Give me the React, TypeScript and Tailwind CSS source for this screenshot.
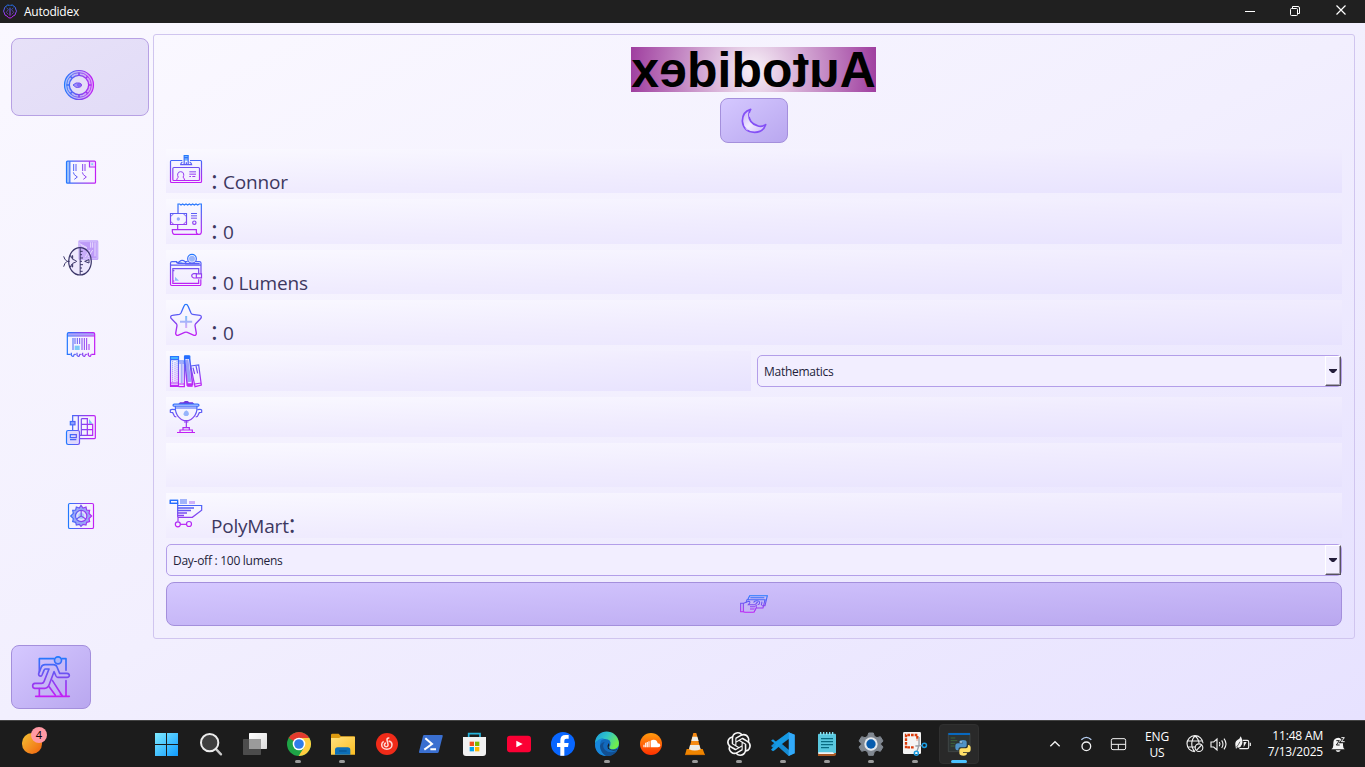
import type { ReactNode } from "react";

type ArtProps = {
  box: string;
  w: number;
  h: number;
  children: ReactNode;
  className?: string;
};

function Art({ box, w, h, children, className = "[&>g]:[stroke-width:3.6]" }: ArtProps) {
  return (
    <svg viewBox={box} width={w} height={h} className={`block shrink-0 ${className}`} fill="none">
      {children}
    </svg>
  );
}

function Grad({ id, x1, y1, x2, y2 }: { id: string; x1: number; y1: number; x2: number; y2: number }) {
  return (
    <linearGradient id={id} gradientUnits="userSpaceOnUse" x1={x1} y1={y1} x2={x2} y2={y2}>
      <stop offset="0" stopColor="#1f7bff" />
      <stop offset="0.5" stopColor="#7a4cf0" />
      <stop offset="1" stopColor="#c51df5" />
    </linearGradient>
  );
}

/* ---------- sidebar icons ---------- */

function ClockIcon() {
  return (
    <Art box="186 204 102 102" w={34} h={34}>
      <Grad id="clock" x1={192} y1={0} x2={282} y2={0} />
      <circle cx="237" cy="255" r="36" stroke="url(#clock)" strokeOpacity="0.3" strokeWidth="14" />
      <g stroke="url(#clock)">
        <circle cx="237" cy="255" r="43.500" strokeWidth="3.500" />
        <circle cx="237" cy="255" r="37" strokeWidth="2.500" />
        <circle cx="237" cy="255" r="29" strokeWidth="4" />
        <path strokeWidth="5" d="M237 218v9M237 283v9M200 255h9M265 255h9M211 229l5 5M258 276l5 5M211 281l5-5M258 234l5-5" />
        <path strokeWidth="3" fill="#8b6cf5" fillOpacity="0.7" d="M219 255l9-6h10q6 1 7 6q-1 6-7 7h-10z" />
        <circle cx="237" cy="255" r="4" strokeWidth="2.500" fill="#7f93fb" />
      </g>
    </Art>
  );
}

function NotebookIcon() {
  return (
    <Art box="72 54 102 84" w={34} h={28}>
      <Grad id="nb" x1={78} y1={0} x2={168} y2={0} />
      <rect x="80" y="64" width="9" height="65" fill="#9cc0fb" />
      <rect x="151" y="66" width="12" height="12" fill="#e6d9ff" />
      <rect x="154" y="70" width="5" height="5" fill="#7fd0f8" />
      <g stroke="url(#nb)">
        <rect x="79.500" y="63.500" width="87" height="66" rx="3" />
        <path d="M89.500 64v65M148.500 64v17h18" />
        <path strokeWidth="3" d="M101 72v21M108 72v21M128 72v21M135 72v21M100 97l3 7 9 7-9 7M127 97l3 7 9 7-9 7" />
      </g>
    </Art>
  );
}

function FishIcon() {
  return (
    <Art box="66 294 114 120" w={38} h={40}>
      <rect x="115" y="301" width="60" height="59" rx="4" fill="#c3a6fa" />
      <rect x="119" y="305" width="52" height="51" rx="2" fill="#bd9af8" stroke="#d8c5ff" strokeWidth="2" />
      <path d="M119 311l22 12M122 316l18 9M152 307v16M158 307v16M165 307v42M149 330l-14 22M158 330l-14 22" stroke="#e8dcff" strokeWidth="3" />
      <g stroke="#3a3568">
        <ellipse cx="120" cy="364" rx="34" ry="41" fill="#dcd0fb" fillOpacity="0.35" />
        <path
          strokeWidth="3"
          d="M120.500 323v82M120 334h8M120 344h6M120 354h9M120 364h6M120 374h9M120 384h6M120 394h8M71 349q2 9 10 15-8 6-10 16M81 364h8M91 346q2 7 5 9v-8h2v11q9 3 12 6-3 3-12 6v11h-2v-8q-4 2-5 9M134 364l13-5v10z"
        />
      </g>
    </Art>
  );
}

function ReportIcon() {
  return (
    <Art box="72 567 102 90" w={34} h={30}>
      <Grad id="rep" x1={80} y1={0} x2={165} y2={0} />
      <rect x="83" y="579" width="80" height="8" fill="#a9a2fb" />
      <rect x="104" y="617" width="15" height="13" fill="#7fcaf7" />
      <g stroke="url(#rep)">
        <path d="M92 643H82V582q0-4 4-4h74q4 0 4 4v61h-10M82 588h82" />
        <path strokeWidth="3" d="M99 594v36M105 594v18M112 594v18M119 594v18M126 594v36M133 594v36M140 594v36M147 612v18M108 643h-6M125 643h-7M142 643h-6" />
        <path d="M94 638v8q2 4 6 3 2-1 2-6M111 638v8q2 4 6 3 2-1 2-6M128 638v8q2 4 6 3 2-1 2-6M145 638v8q2 4 6 3 2-1 2-6" />
      </g>
    </Art>
  );
}

function PlannerIcon() {
  return (
    <Art box="72 69 102 102" w={34} h={34}>
      <Grad id="plan" x1={78} y1={0} x2={168} y2={0} />
      <path d="M147 87v14h11z" fill="#77caf4" />
      <g stroke="url(#plan)">
        <path d="M98 94V77h64q4 0 4 4v62q0 3-4 3h-42M98 105v16M115 78v43M124 86v50M124 86h20M142 86v50M124 103h34v33h-38M124 119h34" />
        <rect x="91" y="94.500" width="14" height="10" fill="#8aa1ff" />
        <rect x="79.500" y="121.500" width="39" height="42" rx="5" fill="#ded8fd" />
        <path d="M91 134h18v9H91zM90 149h19" />
      </g>
    </Art>
  );
}

function GearFrameIcon() {
  return (
    <Art box="78 333 90 90" w={30} h={30}>
      <Grad id="gear" x1={84} y1={0} x2={162} y2={0} />
      <rect x="85.500" y="340.500" width="75" height="75" rx="4" stroke="url(#gear)" strokeWidth="3.500" />
      <path
        d="M118 354l5-8 6 8 9-3 2 9 9 1-2 9 8 8-8 8 2 9-9 2-2 8-9-2-6 6-5-6-9 2-2-8-9-2 2-9-8-8 8-8-2-9 9-1 2-9z"
        fill="#99a5f8"
        stroke="url(#gear)"
        strokeWidth="3.500"
      />
      <circle cx="123.500" cy="378" r="17" fill="#e2ddfd" stroke="url(#gear)" strokeWidth="3.500" />
      <circle cx="123.500" cy="378" r="9" fill="#a5cdf6" />
      <path d="M123.500 362v16l-14 9M123.500 378l14 9" stroke="url(#gear)" strokeWidth="3.500" />
    </Art>
  );
}

function ExitIcon() {
  return (
    <Art box="90 75 126 132" w={42} h={44} className="[&>g]:[stroke-width:5]">
      <Grad id="exit" x1={0} y1={80} x2={0} y2={200} />
      <g stroke="url(#exit)" strokeLinejoin="round" strokeLinecap="round">
        <path d="M118 126V86h44M186 86h12v35M198 152v47M118 176v22M107 199h101" />
        <circle cx="174" cy="91" r="10.500" fill="#a9b3fa" />
        <path d="M122 138q-7 0-6-7l8-20q3-7 11-7h25q8 0 11 7l8 19h22q7 1 7 6 0 6-7 6h-28q-3 0-5-4l-6-13-14 38q-4 12-14 12h-30q-6-1-6-8 0-6 7-7h20q5 0 7-5l15-38h-11q-3 0-4 4l-6 14q-2 4-4 3z" />
        <path d="M148 171l18 25M157 151l30 47M181 192q8 4 4 6" />
      </g>
    </Art>
  );
}

function AppLogo() {
  return (
    <svg viewBox="6 9 48 48" width="16" height="16" className="block" fill="none">
      <Grad id="logo" x1={0} y1={12} x2={0} y2={52} />
      <g stroke="url(#logo)" strokeWidth="3">
        <path d="M29 13q-7-3-11 3-6 3-5 8-5 7 0 12 0 8 8 9 4 7 9 6M31 13q7-3 11 3 6 3 5 8 5 7 0 12 0 8-8 9-4 7-9 6M30 20v24" />
        <path d="M20 20l5 6-6 8 6 6M40 20l-5 6 6 8-6 6" opacity="0.6" />
      </g>
    </svg>
  );
}

function MoonIcon() {
  return (
    <Art box="420 231 84 84" w={28} h={28}>
      <defs>
        <linearGradient id="moon" x1="0" y1="0" x2="1" y2="1">
          <stop offset="0" stopColor="#c3aaf8" />
          <stop offset="0.5" stopColor="#f1ebff" />
          <stop offset="1" stopColor="#c9b2fb" />
        </linearGradient>
      </defs>
      <path
        d="M452 238Q427 245 427 273Q430 306 464 307Q490 306 497 284Q485 292 472 287Q444 278 447 251Q448 244 452 238Z"
        fill="url(#moon)"
        stroke="#8450f5"
        strokeWidth="5"
        strokeLinejoin="round"
      />
      <path d="M449 250v10M437 295l6 5" stroke="#cdbaf9" strokeWidth="4" />
    </Art>
  );
}

/* ---------- row icons ---------- */

function BadgeIcon() {
  return (
    <Art box="33 12 126 132" w={42} h={44}>
      <Grad id="badge" x1={0} y1={30} x2={0} y2={114} />
      <path d="M88 33h11v14H88z" fill="#75b7fb" />
      <g stroke="url(#badge)">
        <path d="M82 46.500H49q-2.500 0-2.500 3v60q0 3 3 3h87q3 0 3-3v-60q0-3-3-3H105" />
        <path d="M87.500 60V31.500h12V60M88 38h11M82 51q-5 3-5 8h33q0-5-6-8M94 52v8" />
        <rect x="53.500" y="67.500" width="80" height="39" rx="3" />
        <path strokeWidth="3" d="M65 106q1-8 5-9-3-5-2-10 1-7 9-7t9 7q1 5-2 10 4 1 5 9M103 80.500h20M103 87.500h20M103 94.500h5M112 94.500h9" />
      </g>
    </Art>
  );
}

function ReceiptIcon() {
  return (
    <Art box="33 162 126 135" w={42} h={45}>
      <Grad id="rcpt" x1={0} y1={174} x2={0} y2={270} />
      <g stroke="url(#rcpt)">
        <path d="M69 205v-28h5l4 3 5-3 5 3 5-3 5 3 5-3 5 3 5-3 5 3 5-3 5 3 5-3h6v85q-1 6-6 6H57q-4-1-5-8v-6h72v8q1 5 6 6M68 239v13" />
        <path d="M46.500 205.500h48v33h-48z" />
        <path strokeWidth="3" d="M47 215l9-9M85 206l9 9M47 229l9 9M85 238l9-9M108 205.500h18M108 212.500h18M108 219.500h18" />
        <circle cx="118" cy="233" r="5" />
      </g>
      <circle cx="70" cy="222" r="5" fill="#91a9fb" />
    </Art>
  );
}

function WalletIcon() {
  return (
    <Art box="33 315 126 132" w={42} h={44}>
      <Grad id="wal" x1={0} y1={327} x2={0} y2={422} />
      <circle cx="111" cy="341" r="9" fill="#9bb5fa" />
      <path d="M70 354q6-7 14 0z" fill="#8ac5fa" />
      <path d="M60 395l12 12H60z" fill="#8ebcf6" />
      <g stroke="url(#wal)">
        <circle cx="111" cy="341" r="13" />
        <path d="M138 387v-33q0-4-5-4h-11M98 350h-8q-5-5-13-3-5 3-7 6h-5v-3H51q-4 0-4.500 4v64q0 3.500 4 3.500h84q3 0 3-4v-15M47 360.500h91M67 355h25M92 350v6h42" />
        <path d="M131 386v-15H53.500v44H131v-12M54 377h4M54 408h4" />
        <path d="M124 386.500h15.500v12H124M124 386h-8q-6 2-6 6t6 7h8z" />
      </g>
    </Art>
  );
}

function StarIcon() {
  return (
    <Art box="33 15 126 135" w={42} h={45}>
      <Grad id="star" x1={0} y1={27} x2={0} y2={123} />
      <defs>
        <linearGradient id="plus" gradientUnits="userSpaceOnUse" x1="0" y1="62" x2="0" y2="98">
          <stop offset="0" stopColor="#73bef9" />
          <stop offset="1" stopColor="#d7a9fa" />
        </linearGradient>
      </defs>
      <path
        d="M93 28q4 0 6 5l9 21q2 4 5 4l22 3q5 1 4 6-1 3-4 6l-13 13q-2 3-2 6l4 23q0 7-7 6l-20-9q-4-1-8 0l-20 9q-6 1-7-6l4-23q0-3-2-6L51 73q-5-4-4-8 1-4 5-4l21-3q3-1 5-4l9-21q2-5 6-5z"
        stroke="url(#star)"
        strokeWidth="4"
      />
      <path d="M93.500 63v36M75 80.500h36.500" stroke="url(#plus)" strokeWidth="6" />
    </Art>
  );
}

function BooksIcon() {
  return (
    <Art box="33 168 126 120" w={42} h={40}>
      <Grad id="books" x1={0} y1={180} x2={0} y2={276} />
      <path d="M48 185h22v8H48z" fill="#45b4ff" />
      <path d="M77 207h6v57h-6z" fill="#a7adf9" />
      <path d="M91 195l9-2 9 67-11 2z" fill="#9b9ffa" />
      <g stroke="url(#books)">
        <path d="M46.500 184.500h24v90h-24zM47 194h23M47 264h23M71 198h17v77H71M73 204h13M73 267h14" />
        <path strokeDasharray="3 3" strokeWidth="2.500" d="M53 199v62M60 202v59M66 199v62" />
        <path d="M89 184v9l8 80M104 182v9l9 80M88 183h16M89 190h16M97 273h16" strokeWidth="4.500" />
        <path d="M107 213l24-3 8 60-19 5zM114 218l5 19M123 213l5 22M119 267l19-3" />
      </g>
      <path d="M88 182h16v10H88z" fill="#256cff" />
      <path d="M97 265h14v9H97zM47 269h24v6H47z" fill="#bd2af6" />
    </Art>
  );
}

function TrophyIcon() {
  return (
    <Art box="33 306 126 120" w={42} h={40}>
      <Grad id="tro" x1={0} y1={318} x2={0} y2={414} />
      <path d="M70 327l5-5h10l5-4h8l5 4h10l5 5z" fill="#7038dd" />
      <path d="M88 350l6-4 6 4 2 8-4 5h-9l-4-5z" fill="#96b4fb" />
      <g stroke="url(#tro)">
        <path d="M58 327.500h70q4 0 4 3t-4 3H58q-4 0-4-3t4-3zM61 334q-1 22 11 33 7 8 15 10h13q8-2 15-10 12-11 11-33M60 339h66" />
        <path d="M60 344q-11-2-14 1v7l7 1 4 8q1 4 7 5M127 344q11-2 13 1v7l-7 1-4 8q-1 4-7 5" />
        <path d="M94 378v20M87 381h13M84 404v-6h19v6M75 411v-6h37v6M66 412.500h54" />
      </g>
    </Art>
  );
}

function CartIcon() {
  return (
    <Art box="33 39 126 135" w={42} h={45}>
      <Grad id="cart" x1={0} y1={58} x2={0} y2={141} />
      <path d="M75 57h21v15H75z" fill="#a2b4fa" />
      <path d="M102 63h18v9h-18z" fill="#cfb1fa" />
      <g stroke="url(#cart)">
        <path d="M69 76.500h71v14l-28 21.500H69v12M69 61H46v9h22v42" />
        <path d="M67 84h50M67 91.500h41M67 99h29M67 106.500h20" strokeWidth="4" />
        <circle cx="68.500" cy="133" r="7.500" />
        <circle cx="102" cy="132" r="7.500" />
        <path d="M76 133h19" />
      </g>
      <path d="M46 61h22v9H46z" stroke="#256dff" strokeWidth="4" />
    </Art>
  );
}

function CashIcon() {
  return (
    <Art box="0 0 90 60" w={30} h={20} className="[&>g]:[stroke-width:3.2]">
      <Grad id="cash" x1={0} y1={4} x2={0} y2={58} />
      <g stroke="url(#cash)">
        <path d="M26 17l6-12h53l-7 30h-9M21 26l3-9h54l-6 25H52M34 11h42" />
        <path d="M44 26q1-6 9-6 9 0 9 6 0 5-6 6M56 24l-6 6M69 23l-2 11" />
        <path d="M5 28h9l15-6q5 0 3 5l-4 5h21q5 2 2 6 3 3-1 6 1 4-3 6 0 5-5 5H18q-3-1-6-2H5zM13 28v24M33 38h15M33 45h14" />
      </g>
    </Art>
  );
}

/* ---------- taskbar ---------- */

type Task = { x: number; dot?: boolean; active?: boolean; art: ReactNode };

const pinned: Task[] = [
  {
    x: 12,
    art: (
      <>
        <linearGradient id="win" gradientUnits="userSpaceOnUse" x1="45" y1="39" x2="114" y2="108">
          <stop offset="0" stopColor="#7eeaff" />
          <stop offset="1" stopColor="#0f9bff" />
        </linearGradient>
        <path fill="url(#win)" d="M45 39h33v33H45zM81 39h33v33H81zM45 75h33v33H45zM81 75h33v33H81z" />
      </>
    ),
  },
  {
    x: 144,
    art: (
      <g>
        <path d="M226 85l17 18" stroke="#c9c9c9" strokeWidth="7" strokeLinecap="round" />
        <circle cx="209" cy="68" r="26" fill="#3f3f3f" stroke="#ececec" strokeWidth="6" />
      </g>
    ),
  },
  {
    x: 276,
    art: (
      <>
        <linearGradient id="tv" x1="0" y1="0" x2="1" y2="1">
          <stop offset="0" stopColor="#fff" />
          <stop offset="1" stopColor="#dcdcdc" />
        </linearGradient>
        <rect x="327" y="39" width="54" height="48" rx="2" fill="url(#tv)" />
        <rect x="309" y="57" width="54" height="48" rx="2" fill="#555" fillOpacity="0.85" />
        <path d="M327 57h36v30h-36z" fill="#9b9b9b" />
      </>
    ),
  },
  {
    x: 408,
    dot: true,
    art: (
      <>
        <circle cx="477" cy="72" r="36" fill="#1ea446" />
        <path d="M477 72L446 54a36 36 0 0 1 62 0z" fill="#e33b2e" />
        <path d="M508 54a36 36 0 0 1-32 54l17-27-16-27z" fill="#ffcd40" />
        <circle cx="477" cy="72" r="19" fill="#fff" />
        <circle cx="477" cy="72" r="14.500" fill="#2f7de9" />
      </>
    ),
  },
  {
    x: 540,
    dot: true,
    art: (
      <>
        <path d="M573 45q0-4 4-4h19l7 8h38q4 0 4 4v18h-72z" fill="#dc9a10" />
        <linearGradient id="fold" x1="0" y1="0" x2="1" y2="1">
          <stop offset="0" stopColor="#ffe17f" />
          <stop offset="1" stopColor="#fbbd21" />
        </linearGradient>
        <path d="M573 54h24l7-4h41v54h-72z" fill="url(#fold)" />
        <path d="M585 104V90q0-8 8-8h30q8 0 8 8v14z" fill="#0c6fb8" />
        <path d="M597 93h23" stroke="#074e8a" strokeWidth="3" />
      </>
    ),
  },
  {
    x: 672,
    art: (
      <g>
        <circle cx="741" cy="72" r="33" fill="#f02b19" />
        <path
          d="M748 54q-8-1-7 6l3 13a5.500 5.500 0 1 1-6-4M731 64q-6 4-6 10a15 13 0 0 0 31 0q0-9-10-11"
          stroke="#ffd9d4"
          strokeWidth="4.500"
        />
      </g>
    ),
  },
  {
    x: 804,
    art: (
      <g>
        <path d="M852 45h54q3 0 2 4l-12 47q-1 3-4 3h-52q-4 0-3-4l12-47q1-3 3-3z" fill="#3a6fd0" />
        <path d="M856 55l20 17-23 17M871 88h17" stroke="#fff" strokeWidth="6" />
      </g>
    ),
  },
  {
    x: 936,
    art: (
      <g>
        <path d="M986 55V41h34v14" stroke="#26b4dc" strokeWidth="5" />
        <path d="M969 51h69v48q0 9-9 9h-51q-9 0-9-9z" fill="#f1f1f1" />
        <path d="M989 65h13v13h-13z" fill="#f25022" />
        <path d="M1005 65h13v13h-13z" fill="#7fba00" />
        <path d="M989 81h13v13h-13z" fill="#00a4ef" />
        <path d="M1005 81h13v13h-13z" fill="#ffb900" />
      </g>
    ),
  },
  {
    x: 1068,
    art: (
      <g>
        <rect x="1101" y="47" width="72" height="50" rx="9" fill="#fb0034" />
        <path d="M1129 62l19 10-19 10z" fill="#fff" />
      </g>
    ),
  },
];

const apps: Task[] = [
  {
    x: 3,
    art: (
      <g>
        <circle cx="69" cy="72" r="36" fill="#0866ff" />
        <path d="M61 107V81H51V69h10v-8q0-16 16-16h9v11h-7q-6 0-6 6v7h13l-2 12H73v26z" fill="#fff" />
      </g>
    ),
  },
  {
    x: 135,
    dot: true,
    art: (
      <>
        <linearGradient id="edgeA" x1="0" y1="0" x2="1" y2="0.500">
          <stop offset="0" stopColor="#1898df" />
          <stop offset="0.500" stopColor="#30c5c9" />
          <stop offset="1" stopColor="#70ed4c" />
        </linearGradient>
        <circle cx="201" cy="72" r="36" fill="#1269bd" />
        <path d="M165 70C166 23 232 22 237 69Q237 88 215 88q-11-2-4-12 4-20-18-19-20 1-28 13z" fill="url(#edgeA)" />
        <path d="M165 72q8-18 28-18-14 7-13 23 2 20 20 31-34-1-35-36z" fill="#1787dc" />
        <path d="M194 66q-10 12 1 24 15 13 36 2-12 18-33 16-17-11-18-30 3-10 14-12z" fill="#124f91" />
        <path d="M206 69q-6 9-2 17 12 9 30 3-5-1-14 1-15-1-14-10 4-4 0-11z" fill="#1c1c1c" />
      </>
    ),
  },
  {
    x: 267,
    art: (
      <>
        <linearGradient id="sc" x1="0" y1="0" x2="0" y2="1">
          <stop offset="0" stopColor="#ff9b0e" />
          <stop offset="1" stopColor="#ff3000" />
        </linearGradient>
        <circle cx="333" cy="72" r="33" fill="url(#sc)" />
        <path d="M332 82V62q4-3 9-3 11 1 12 11 8 0 8 6t-7 6z" fill="#fff" />
        <path d="M327 64v18M322 66v16M317 68v14M312 74v8" stroke="#ffe9dc" strokeWidth="4" />
      </>
    ),
  },
  {
    x: 399,
    dot: true,
    art: (
      <g>
        <path d="M440 87h48l7 18h-60z" fill="#ef8500" />
        <path d="M460 39h9l13 50q-17 8-35 0z" fill="#f58a12" />
        <path d="M457 50h15l4 13h-22zM450 75h28l4 13q-18 7-35 0z" fill="#ecebe5" />
        <path d="M435 104h60" stroke="#bf6000" strokeWidth="2" />
      </g>
    ),
  },
  {
    x: 531,
    dot: true,
    art: (
      <g transform="translate(561 36) scale(3)" fill="#f7f7f7">
        <path d="M22.282 9.821a5.985 5.985 0 0 0-.516-4.910 6.046 6.046 0 0 0-6.510-2.900A6.065 6.065 0 0 0 4.981 4.182a5.985 5.985 0 0 0-3.998 2.900 6.046 6.046 0 0 0 .743 7.097 5.980 5.980 0 0 0 .510 4.911 6.051 6.051 0 0 0 6.515 2.900A5.985 5.985 0 0 0 13.260 24a6.056 6.056 0 0 0 5.772-4.206 5.990 5.990 0 0 0 3.998-2.900 6.056 6.056 0 0 0-.748-7.073zM13.260 22.430a4.476 4.476 0 0 1-2.876-1.040l.141-.081 4.779-2.758a.795.795 0 0 0 .393-.681v-6.737l2.020 1.168a.071.071 0 0 1 .038.052v5.583a4.504 4.504 0 0 1-4.495 4.494zM3.600 18.304a4.470 4.470 0 0 1-.535-3.014l.142.085 4.783 2.759a.771.771 0 0 0 .780 0l5.843-3.369v2.332a.080.080 0 0 1-.033.062L9.740 19.950a4.500 4.500 0 0 1-6.140-1.646zM2.340 7.896a4.485 4.485 0 0 1 2.366-1.973V11.600a.766.766 0 0 0 .388.676l5.815 3.355-2.020 1.168a.076.076 0 0 1-.071 0l-4.830-2.786A4.504 4.504 0 0 1 2.340 7.872zm16.597 3.855l-5.833-3.387L15.119 7.200a.076.076 0 0 1 .071 0l4.830 2.791a4.494 4.494 0 0 1-.676 8.105v-5.678a.790.790 0 0 0-.407-.667zm2.010-3.023l-.141-.085-4.774-2.782a.776.776 0 0 0-.785 0L9.409 9.230V6.897a.066.066 0 0 1 .028-.061l4.830-2.787a4.500 4.500 0 0 1 6.680 4.660zm-12.640 4.135l-2.020-1.164a.080.080 0 0 1-.038-.057V6.075a4.500 4.500 0 0 1 7.375-3.453l-.142.080L8.704 5.460a.795.795 0 0 0-.393.681zm1.097-2.365l2.602-1.500 2.607 1.500v2.999l-2.597 1.500-2.607-1.500z" />
      </g>
    ),
  },
  {
    x: 663,
    dot: true,
    art: (
      <g>
        <path d="M746 37l18 7v56l-18 8-37-33-10 8-6-5 15-14z" fill="#168bd2" />
        <path d="M699 58l10 8 37-29v17L705 90l-6 4-6-5 15-16-15-11z" fill="#1599e3" />
        <path d="M746 37l18 7v56l-18 8z" fill="#32aafa" />
        <path d="M746 57v32l-20-17z" fill="#1c1c1c" />
      </g>
    ),
  },
  {
    x: 795,
    dot: true,
    art: (
      <g>
        <rect x="834" y="41" width="54" height="62" rx="3" fill="#5ac8df" />
        <path d="M834 99h54v4q0 5-5 5h-49z" fill="#a95823" />
        <path d="M835 97h43l6 5h-49z" fill="#f2f2f2" />
        <path d="M842 36v9M851 36v9M860 36v9M869 36v9M878 36v9" stroke="#85e2f2" strokeWidth="4" />
        <path d="M843 56h36M843 65h36M843 74h36M843 83h24" stroke="#086c83" strokeWidth="3.500" />
      </g>
    ),
  },
  {
    x: 927,
    dot: true,
    art: (
      <g>
        <path
          d="M986 39h14l3 10 8 4 10-3 8 13-8 9 8 9-8 13-10-3-8 4-3 11h-14l-3-11-8-4-10 3-8-13 8-9-8-9 8-13 10 3 8-4z"
          fill="#818891"
          stroke="#818891"
          strokeWidth="3"
          strokeLinejoin="round"
        />
        <circle cx="993" cy="72" r="20" fill="#e4e8ed" />
        <circle cx="993" cy="72" r="14" fill="#075cae" />
      </g>
    ),
  },
  {
    x: 1059,
    dot: true,
    art: (
      <g>
        <rect x="1089" y="36" width="54" height="66" rx="4" fill="#f4f4f4" />
        <path d="M1098 85V45h34v16M1102 82h20" stroke="#da3b0b" strokeWidth="7" strokeDasharray="8 3" />
        <path d="M1137 51v25l-6 18M1126 78l20-1" stroke="#9aa0a6" strokeWidth="4" />
        <circle cx="1153" cy="76" r="6.500" stroke="#1b9de2" strokeWidth="4.500" />
        <circle cx="1129" cy="100" r="6" stroke="#1b9de2" strokeWidth="4.500" />
      </g>
    ),
  },
  {
    x: 1191,
    active: true,
    art: (
      <g>
        <path d="M1225 40h65v55h-65z" fill="#2d3434" stroke="#4a5252" strokeWidth="2" />
        <path d="M1225 39h65v6h-65z" fill="#0869bf" />
        <path d="M1232 54h14M1232 62h20M1232 70h14M1232 78h12" stroke="#3e6439" strokeWidth="3" />
        <path d="M1269 60q11 0 11 7v9q0 6-6 6h-13q-6 0-6 9h-3q-7 0-6-13 0-8 8-8h15v-2h-11v-3q0-5 11-5z" fill="#4f93c8" />
        <path d="M1271 107q-13 0-13-7v-9q0-6 6-6h14q6 0 6-10h2q7 1 6 13 0 9-8 9h-15v2h12q0 8-10 8z" fill="#ffdf68" />
        <circle cx="1263" cy="66" r="2" fill="#fff" />
      </g>
    ),
  },
];

function TaskButton({ task }: { task: Task }) {
  return (
    <div className="relative h-[47px] w-[44px] shrink-0">
      {task.active && <div className="absolute top-[4px] left-[2px] h-[40px] w-[40px] rounded-[4px] border border-[#303030] bg-[#292929]" />}
      <svg viewBox={`${task.x} 0 132 141`} width="44" height="47" className="relative block" fill="none">
        {task.art}
      </svg>
      {task.dot && <div className="absolute top-[40px] left-[19px] h-[3px] w-[6px] rounded-full bg-[#9a9a9a]" />}
      {task.active && <div className="absolute top-[40px] left-[14px] h-[3px] w-[16px] rounded-full bg-[#4cc2ff]" />}
    </div>
  );
}

function TrayIcons() {
  return (
    <Art box="483 0 222 141" w={74} h={47} className="[&>g]:[stroke-width:3.4]">
      <g stroke="#f2f2f2">
        <path d="M549 70a24 24 0 1 0-24 25M502 63h45M502 81h24M525 48c-13 12-13 35 0 47M525 48q12 10 12 22" />
        <circle cx="537" cy="83" r="11.500" />
        <path d="M529 91l16-16" />
        <path d="M573 66h8l10-9v33l-10-9h-8zM598 66q4 6 0 13M605 61q8 12 0 23M612 56q12 16 0 32" />
        <path d="M668 61h14q4 0 4 4v17q0 4-4 4h-24M691 68v10" />
      </g>
      <path d="M646 75q-2-13 12-19l4-7q8 13 4 24-5 13-14 9l-4 5z" fill="#f2f2f2" />
      <path d="M649 82q7-8 11-17" stroke="#1c1c1c" strokeWidth="2" />
      <path d="M671 66h9l-9 16z" fill="#f2f2f2" />
    </Art>
  );
}

/* ---------- content ---------- */

const surface = "bg-linear-to-br from-[#faf8ff] via-[#f2effe] to-[#e7e2ff]";
const rowClass = "flex w-full shrink-0 bg-linear-to-br from-[#faf9ff] via-[#f0ecfe] to-[#e7e2fe]";

function InfoRow({ height, icon, children }: { height: string; icon?: ReactNode; children?: ReactNode }) {
  return (
    <div className={`${rowClass} ${height} items-start`}>
      {icon}
      <div className="mt-[15px] flex h-[30px] items-baseline pl-[3px] text-[19px] leading-[30px] tracking-[-0.200px] text-[#3d3860]">
        {children}
      </div>
    </div>
  );
}

function Value({ children }: { children: ReactNode }) {
  return (
    <>
      <span className="w-[12px] text-[26px] leading-[30px]">:</span>
      <span>{children}</span>
    </>
  );
}

function ComboBox({ label }: { label: string }) {
  return (
    <div className="flex h-[32px] w-full shrink-0 rounded-[5px] border border-[#b39ee9] bg-[#f2eeff] pl-[6px]">
      <span className="flex-1 text-[12px] leading-[31px] tracking-[-0.270px] text-[#231d3a]">{label}</span>
      <div className="flex h-[30px] w-[16px] items-center justify-center border border-t-white border-r-[#57525f] border-b-[#57525f] border-l-white bg-[#f2eeff] shadow-[inset_-1px_-1px_0_#aaa5b5]">
        <svg width="8" height="4" viewBox="0 0 8 4" className="block">
          <path d="M0 0h8v1L5 4H3L0 1z" fill="#231d3a" />
        </svg>
      </div>
    </div>
  );
}

const buttonClass =
  "flex items-center justify-center border border-[#a48fdc] bg-linear-to-br from-[#d5c8ff] to-[#b9a7ef]";

export default function App() {
  return (
    <div className="flex h-[767px] w-[1365px] flex-col overflow-hidden font-['Open_Sans','Noto_Sans',sans-serif]">
      <header className="flex h-[23px] shrink-0 items-center bg-[#202020] text-white">
        <div className="ml-[2px]">
          <AppLogo />
        </div>
        <span className="ml-[6px] flex-1 text-[12px] leading-[23px] tracking-[-0.250px]">Autodidex</span>
        <svg width="120" height="23" viewBox="0 0 120 23" fill="none" stroke="#fff" className="block">
          <path d="M0 11.500h10" />
          <rect x="45.500" y="8.500" width="7" height="7" rx="1" />
          <path d="M47.500 8V6.500h5.500q1.500 0 1.500 1.500v5.500H53" />
          <path d="M91.500 5.500l9 9M100.500 5.500l-9 9" strokeWidth="1.200" />
        </svg>
      </header>

      <main className={`flex h-[697px] shrink-0 ${surface}`}>
        <aside className="flex w-[153px] shrink-0 flex-col pt-[15px] pl-[11px]">
          <div className="flex h-[78px] w-[138px] rounded-[8px] border border-[#b7a1e4] bg-linear-to-br from-[#e7e1f8] to-[#e2dcf7] pt-[29px] pl-[50px]">
            <ClockIcon />
          </div>
          <div className="mt-[8px] flex h-[78px] pt-[34px] pl-[53px]"><NotebookIcon /></div>
          <div className="mt-[8px] flex h-[78px] pt-[28px] pl-[51px]"><FishIcon /></div>
          <div className="mt-[8px] flex h-[78px] pt-[33px] pl-[53px]"><ReportIcon /></div>
          <div className="mt-[8px] flex h-[78px] pt-[31px] pl-[53px]"><PlannerIcon /></div>
          <div className="mt-[8px] flex h-[78px] pt-[33px] pl-[55px]"><GearFrameIcon /></div>
          <button className={`${buttonClass} mt-[99px] h-[64px] w-[80px] rounded-[8px]`}>
            <ExitIcon />
          </button>
        </aside>

        <section className={`mt-[11px] flex h-[605px] w-[1202px] flex-col rounded-[3px] border border-[#d0c5ef] px-[12px] pt-[12px] ${surface}`}>
          <div className="flex shrink-0 flex-col items-center pr-[2px]">
            <div className="flex h-[45px] w-[245px] -scale-x-100 items-center justify-center bg-[radial-gradient(circle_123px_at_center,#f8f2f8_0%,#a040a0_100%)]">
              <span className="pt-[2px] font-['Liberation_Sans',sans-serif] text-[50px] leading-[45px] font-bold text-black">Autodidex</span>
            </div>
            <button className={`${buttonClass} mt-[6px] ml-[1px] h-[45px] w-[68px] rounded-[8px]`}>
              <MoonIcon />
            </button>
          </div>

          <div className="mt-[6px] flex flex-col gap-[6px]">
            <InfoRow height="h-[44px]" icon={<BadgeIcon />}><Value>Connor</Value></InfoRow>
            <InfoRow height="h-[45px]" icon={<ReceiptIcon />}><Value>0</Value></InfoRow>
            <InfoRow height="h-[44px]" icon={<WalletIcon />}><Value>0 Lumens</Value></InfoRow>
            <InfoRow height="h-[45px]" icon={<StarIcon />}><Value>0</Value></InfoRow>
            <div className="flex h-[40px] gap-[6px]">
              <div className={`${rowClass} max-w-[585px]`}>
                <BooksIcon />
              </div>
              <div className="flex w-[585px] items-center">
                <ComboBox label="Mathematics" />
              </div>
            </div>
            <InfoRow height="h-[40px]" icon={<TrophyIcon />} />
            <InfoRow height="h-[44px]" />
            <InfoRow height="h-[45px]" icon={<CartIcon />}>
              <span>PolyMart</span>
              <span className="text-[26px] leading-[30px]">:</span>
            </InfoRow>
            <ComboBox label="Day-off : 100 lumens" />
            <button className={`${buttonClass} h-[44px] w-full rounded-[8px]`}>
              <CashIcon />
            </button>
          </div>
        </section>
      </main>

      <footer className="flex h-[47px] shrink-0 bg-[#1c1c1c] text-white shadow-[inset_0_1px_0_#444]">
        <div className="relative w-[144px] shrink-0">
          <div className="mt-[13px] ml-[22px] h-[21px] w-[20px] rounded-full bg-linear-to-br from-[#f2c233] to-[#ee5d0c]" />
          <span className="absolute top-[7px] left-[31px] h-[16px] w-[16px] rounded-full bg-[#ff99a4] text-center text-[11px] leading-[16px] text-black">4</span>
        </div>
        <nav className="flex">
          {pinned.map((task) => (
            <TaskButton key={task.x} task={task} />
          ))}
        </nav>
        <nav className="ml-px flex">
          {apps.map((task) => (
            <TaskButton key={task.x} task={task} />
          ))}
        </nav>
        <Art box="-81 0 420 141" w={140} h={47} className="ml-[12px]">
          <g stroke="#f2f2f2" strokeWidth="4">
            <path d="M91 79l14-14 14 14" />
            <circle cx="199" cy="79" r="13" />
            <path d="M184 59q15-14 30 0" stroke="#b7d0f4" />
            <rect x="274" y="56" width="43" height="33" rx="5" strokeWidth="3" />
            <path d="M274 73h43M295 73v16" strokeWidth="3" />
          </g>
        </Art>
        <div className="w-[48px] shrink-0 pt-[9px] text-center text-[12px] leading-[16px] tracking-[-0.200px]">
          ENG
          <br />
          US
        </div>
        <TrayIcons />
        <div className="w-[68px] shrink-0 pt-[8px] text-right text-[12px] leading-[16px] tracking-[-0.180px] whitespace-nowrap">
          <div>11:48 AM</div>
          <div>7/13/2025</div>
        </div>
        <Art box="924 0 66 141" w={22} h={47} className="ml-[5px]">
          <path d="M934 88q6-4 6-12v-8q0-14 15-15 12 1 14 15v8q0 8 5 12zM947 91h15q-2 5-8 5-5 0-7-5z" fill="#f5f5f5" />
          <path d="M949 62h9l-9 13h10" stroke="#1c1c1c" strokeWidth="3" />
          <path d="M962 54h11l-10 12h11" stroke="#1c1c1c" strokeWidth="7" />
          <path d="M964 53h9l-9 12h10" stroke="#f5f5f5" strokeWidth="3" />
        </Art>
      </footer>
    </div>
  );
}
